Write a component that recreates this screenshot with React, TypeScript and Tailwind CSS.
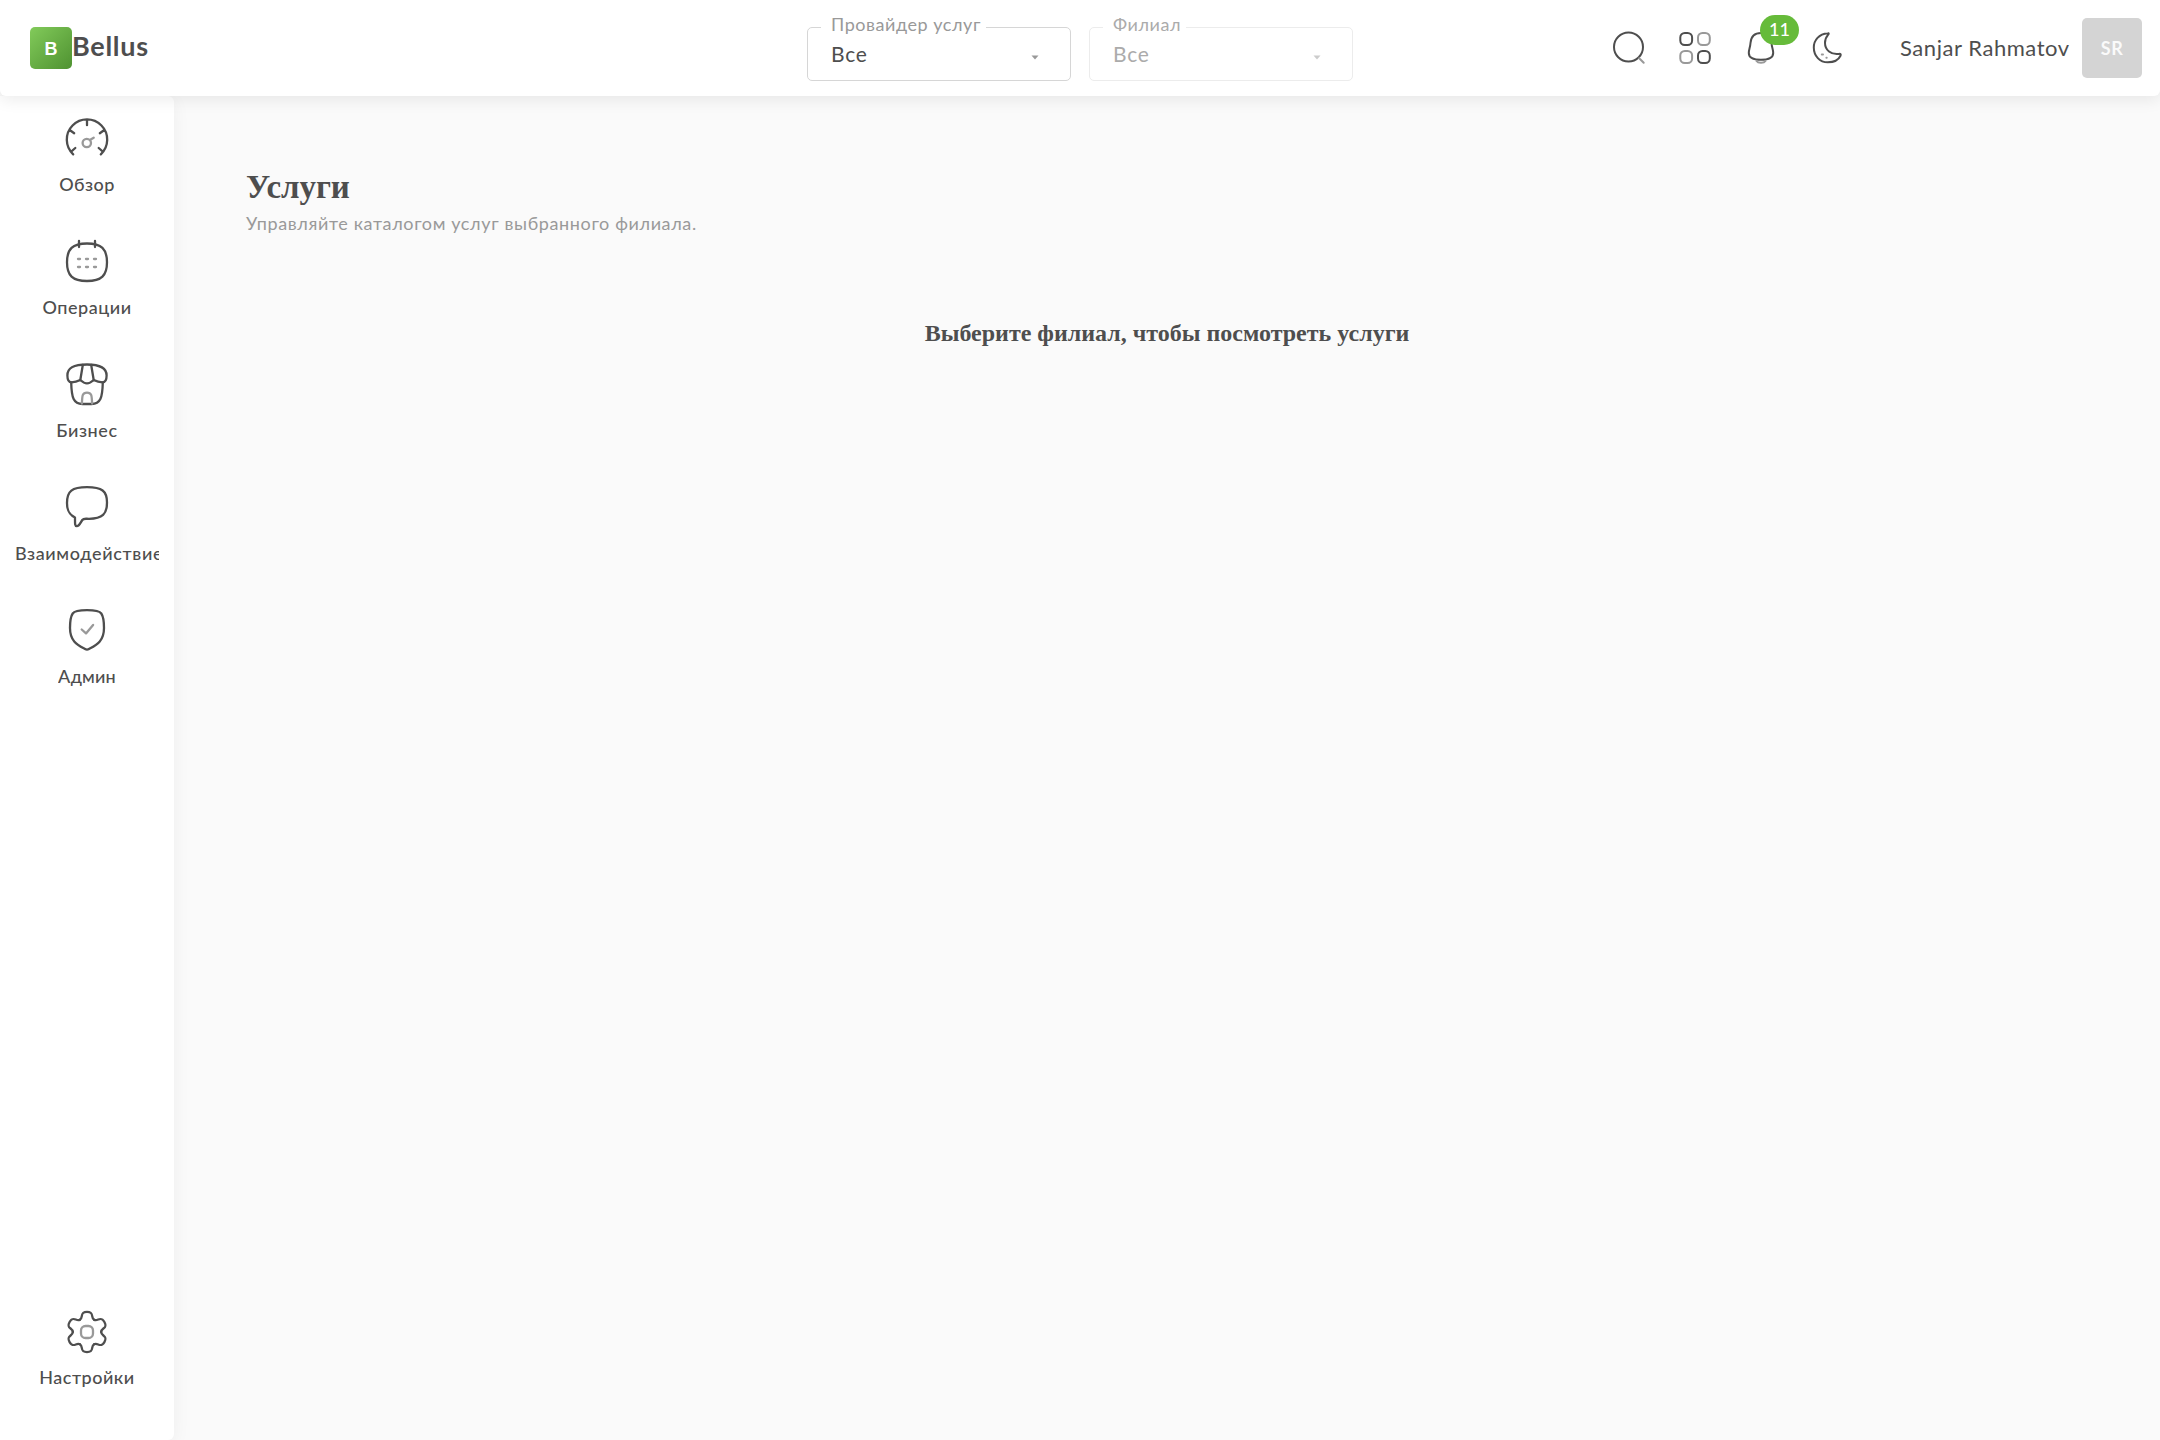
import type { ReactNode } from 'react'

const DARK = '#4e4e4e'
const SOFT = '#999999'

function Icon({ size, children }: { size: number; children: ReactNode }) {
  return (
    <svg
      width={size}
      height={size}
      viewBox={`0 0 ${size} ${size}`}
      fill="none"
      stroke={DARK}
      strokeWidth={size === 48 ? 2.3 : 2}
      strokeLinecap="round"
      strokeLinejoin="round"
      className="shrink-0"
    >
      {children}
    </svg>
  )
}

const GaugeIcon = () => (
  <Icon size={48}>
    <path d="M10.2 38.4A20.2 20.2 0 1 1 37.8 38.4M24 3.8v5.4M7 14.2l4.2 3M41 14.2l-4.2 3M7.9 35.8l4.4-3.8M40.1 35.8l-4.4-3.8" />
    <g stroke={SOFT}>
      <circle cx="23.8" cy="27" r="4.2" />
      <path d="M26.9 24l3.8-2.3" />
    </g>
  </Icon>
)

const CalendarIcon = () => (
  <Icon size={48}>
    <path d="M24 4.5C38.5 4.5 44 10 44 23.3S38.5 42 24 42 4 36.6 4 23.3 9.5 4.5 24 4.5Z" />
    <path d="M16 2v6M32 2v6" />
    <path stroke={SOFT} d="M15 20h2M23 20h2M31 20h2M15 28h2M23 28h2M31 28h2" />
  </Icon>
)

const StoreIcon = () => (
  <Icon size={48}>
    <path d="M24 2.5C37 2.5 43.6 5.5 43.6 13.5C43.6 17 42.3 20.3 39.5 20.3C37 20.3 33.5 19.5 30.7 18C28.5 20 27 21.3 24 21.3S19.5 20 17.3 18C14.5 19.5 11 20.3 8.5 20.3C5.7 20.3 4.4 17 4.4 13.5C4.4 5.5 11 2.5 24 2.5Z" />
    <path d="M19.8 3l-2.5 15M28.2 3l2.5 15" />
    <path d="M8.2 20.5C8.6 36 10.5 42 19.5 42h9C37.5 42 39.4 36 39.8 20.5" />
    <path stroke={SOFT} d="M18.9 41.5C19.2 33 19.5 30.6 24 30.6S28.8 33 29.1 41.5" />
  </Icon>
)

const ChatIcon = () => (
  <Icon size={48}>
    <path d="M12 32.5C6 29.5 4 25.5 4 18C4 6 9 2.2 24 2.2S44 6 44 17.5S39.5 33.8 26 33.8C22 33.8 20.5 33.2 19.3 35C17.5 37.8 16.3 41.2 13.8 41.2C11.8 41.2 12 38.5 12 32.5Z" />
  </Icon>
)

const ShieldIcon = () => (
  <Icon size={48}>
    <path d="M24 2.2C31 2.2 36.5 2.8 38.3 5.5C40.3 8.5 41 14 41 20C41 33 34 36.5 26 41C24.5 41.9 23.5 41.9 22 41C14 36.5 7 33 7 20C7 14 7.7 8.5 9.7 5.5C11.5 2.8 17 2.2 24 2.2Z" />
    <path stroke={SOFT} d="M18.7 21.5l4.3 3.9 7.1-8.5" />
  </Icon>
)

const SettingsIcon = () => (
  <Icon size={48}>
    {[0, 60, 120, 180, 240, 300].map((angle) => (
      <path
        key={angle}
        transform={`translate(24 24) rotate(${angle})`}
        d="M-7.1-12.3C-3.3-14.3-7.8-20.1 0-20.1C7.8-20.1 3.3-14.3 7.1-12.3"
      />
    ))}
    <rect stroke={SOFT} x="18" y="18" width="12" height="12" rx="4.5" />
  </Icon>
)

const SearchIcon = () => (
  <Icon size={36}>
    <circle cx="17.5" cy="17" r="14.5" />
    <path stroke={SOFT} d="M28.2 28.2l4.5 4.6" />
  </Icon>
)

const GridIcon = () => (
  <Icon size={36}>
    <rect x="3.3" y="3" width="11.8" height="12" rx="4.5" />
    <rect x="21" y="21" width="11.8" height="12" rx="4.5" />
    <g stroke={SOFT}>
      <rect x="21" y="3" width="11.8" height="12" rx="4.5" />
      <rect x="3.3" y="21" width="11.8" height="12" rx="4.5" />
    </g>
  </Icon>
)

const BellIcon = () => (
  <Icon size={36}>
    <path d="M18 3C11 3 8 6.5 7.5 13C7.2 17.5 5.8 19.5 5.8 23C5.8 27.5 9 29.8 18 29.8S30.2 27.5 30.2 23C30.2 19.5 28.8 17.5 28.5 13C28 6.5 25 3 18 3Z" />
    <path stroke={SOFT} d="M13.5 31C15 33.4 21 33.4 22.5 31" />
  </Icon>
)

const MoonIcon = () => (
  <Icon size={36}>
    <path d="M18.8 3.2C10 4 4.8 10 4.8 17.5C4.8 26 10.8 32.3 18.8 32.3C25 32.3 29.5 30 31.5 25.8C32.2 24.2 31.5 23.6 30 23.9C22 25 16 20 16 13C16 9.5 17 7 19 4.8C20 3.6 20 3 18.8 3.2Z" />
    <path stroke={SOFT} d="M12.8 24.5h1.2M17.4 27.8h.3" />
  </Icon>
)

function NavItem({ icon, label, tracking }: { icon: ReactNode; label: string; tracking: string }) {
  return (
    <a className="flex h-[123px] w-full flex-col items-center px-[15px]">
      {icon}
      <span
        className={`block max-w-full overflow-hidden text-[18px] leading-[26px] font-medium whitespace-nowrap ${tracking}`}
      >
        {label}
      </span>
    </a>
  )
}

function SelectField({ label, disabled }: { label: string; disabled?: boolean }) {
  return (
    <div
      className={`relative flex h-[54px] w-[264px] items-center justify-between rounded-[5px] border pr-[31px] pl-[23px] ${
        disabled ? 'border-[#ececec] text-[#ababab]' : 'border-[#d6d6d6] text-[#4e4e4e]'
      }`}
    >
      <span
        className={`absolute top-[-17px] left-[13px] bg-white pr-[5px] pl-[10px] text-[18px] leading-[26px] tracking-[0.55px] whitespace-nowrap ${
          disabled ? 'text-[#ababab]' : 'text-[#999999]'
        }`}
      >
        {label}
      </span>
      <span className="text-[21px] leading-[30px] tracking-[0.8px]">Все</span>
      <svg width="8" height="5" viewBox="0 0 8 5" className="mt-[6px]">
        <path d="M.5.5h7L4 4.5Z" fill={disabled ? '#cccccc' : '#999999'} />
      </svg>
    </div>
  )
}

export default function App() {
  return (
    <div className="flex h-[1440px] w-[2160px] flex-col overflow-hidden bg-[#fafafa] font-['Lato','Noto_Sans',sans-serif] text-[#4e4e4e]">
      <header className="relative z-10 flex h-[96px] shrink-0 items-center justify-between rounded-b-[6px] bg-white pr-[18px] pl-[30px] shadow-[0_4px_16px_rgba(0,0,0,0.08)]">
        <div className="flex w-[777px] items-center">
          <div className="flex h-[42px] w-[42px] items-center justify-center rounded-[5px] bg-linear-to-br from-[#82cb5a] to-[#4f9231] pt-[3px] font-['Liberation_Sans',sans-serif] text-[18px] font-bold text-white">
            B
          </div>
          <span className="pb-[4px] text-[27px] leading-[36px] font-bold tracking-[0.7px]">Bellus</span>
        </div>
        <div className="flex gap-[18px] pt-[12px]">
          <SelectField label="Провайдер услуг" />
          <SelectField label="Филиал" disabled />
        </div>
        <div className="flex w-[789px] items-center justify-end">
          <div className="flex gap-[30px]">
            <SearchIcon />
            <GridIcon />
            <div className="relative">
              <BellIcon />
              <span className="absolute -top-[15px] left-[17px] flex h-[30px] w-[39px] items-center justify-center rounded-[15px] bg-[#66bb3a] pb-px text-[18px] font-medium text-white">
                11
              </span>
            </div>
            <MoonIcon />
          </div>
          <span className="mr-[11px] ml-[55px] w-[171px] text-[22px] leading-[30px] tracking-[0.55px] whitespace-nowrap">
            Sanjar Rahmatov
          </span>
          <div className="flex h-[60px] w-[60px] items-center justify-center rounded-[5px] bg-[#d4d4d4] text-[18px] font-bold tracking-[0.5px] text-[#fafafa]">
            SR
          </div>
        </div>
      </header>
      <div className="flex min-h-0 flex-1">
        <nav className="flex w-[174px] shrink-0 flex-col justify-between rounded-r-[6px] bg-white pt-[20px] pb-[9px] shadow-[0_4px_18px_rgba(0,0,0,0.05)]">
          <div>
            <NavItem icon={<GaugeIcon />} label="Обзор" tracking="mt-[7px] tracking-[0.5px]" />
            <NavItem icon={<CalendarIcon />} label="Операции" tracking="mt-[7px] tracking-[0.55px]" />
            <NavItem icon={<StoreIcon />} label="Бизнес" tracking="mt-[7px] tracking-[0.6px]" />
            <NavItem icon={<ChatIcon />} label="Взаимодействие" tracking="mt-[7px] tracking-[0.65px]" />
            <NavItem icon={<ShieldIcon />} label="Админ" tracking="mt-[7px] tracking-[0.2px]" />
          </div>
          <NavItem icon={<SettingsIcon />} label="Настройки" tracking="mt-[8px] tracking-[0.5px]" />
        </nav>
        <main className="flex-1 px-[72px] pt-[70px]">
          <h1 className="font-['Liberation_Serif',serif] text-[33px] leading-[42px] font-bold tracking-[-0.1px]">
            Услуги
          </h1>
          <p className="text-[18px] leading-[30px] tracking-[0.63px] text-[#999999]">
            Управляйте каталогом услуг выбранного филиала.
          </p>
          <h2 className="mt-[80px] text-center font-['Liberation_Serif',serif] text-[24px] leading-[30px] font-bold">
            Выберите филиал, чтобы посмотреть услуги
          </h2>
        </main>
      </div>
    </div>
  )
}
